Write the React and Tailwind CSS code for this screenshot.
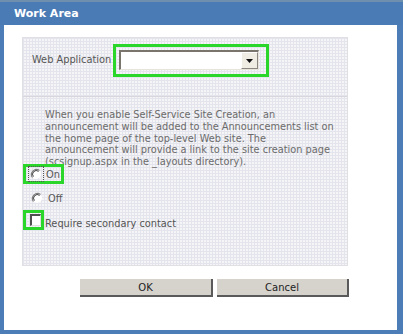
import React from "react";

function Radio({ focus }) {
  return (
    <span className={"relative inline-flex items-center justify-center w-[14px] h-[14px] " + (focus ? "outline outline-1 outline-dotted outline-[#555]" : "")}>
      <svg width="12" height="12" viewBox="0 0 12 12">
        <circle cx="6" cy="6" r="5" fill="#ffffff" />
        <path d="M9.5 2.5 A5 5 0 0 0 2.5 9.5" fill="none" stroke="#808080" strokeWidth="1.2" />
        <path d="M8.6 3.4 A3.7 3.7 0 0 0 3.4 8.6" fill="none" stroke="#404040" strokeWidth="1" />
      </svg>
    </span>
  );
}

export default function App() {
  const grid =
    "bg-[#f5f5f7] bg-[linear-gradient(to_right,#e4e4ec_1px,transparent_1px),linear-gradient(to_bottom,#e4e4ec_1px,transparent_1px)] bg-[size:3px_3px]";
  const font = "font-['DejaVu_Sans',Verdana,sans-serif]";
  return (
    <div className={"w-[403px] h-[334px] bg-[#4d7db6] flex flex-col overflow-hidden " + font}>
      <div className="h-[25px] shrink-0 flex items-center pl-[14px] border-t-[2px] border-[#6f8fae] bg-[#4b7bb5]">
        <span className="text-white font-bold text-[11px] leading-none">Work Area</span>
      </div>
      <div className="ml-[4px] mr-[6px] h-[305px] bg-white flex flex-col pl-[18px] pt-[12px]">
        <div className={"w-[326px] h-[229px] border border-[#e0e0e4] flex flex-col " + grid}>
          <div className="h-[59px] shrink-0 border-b border-[#d6d6dc] flex items-start pt-[6px] pl-[9px]">
            <div className="h-[33px] w-[81px] flex items-center">
              <span className="text-[9.8px] text-[#555] whitespace-nowrap">Web Application</span>
            </div>
            <div className="border-[3px] border-[#2ad62a] pl-[3px] pr-[7px] pt-[3px] pb-[4px]">
              <div className="w-[140px] h-[20px] bg-white border-t-2 border-l-2 border-t-[#7a756c] border-l-[#7a756c] border-b border-r border-b-[#e8e4dc] border-r-[#e8e4dc] flex justify-end">
                <div className="w-[17px] h-full bg-[#efece4] border-l border-t border-[#ffffff] border-r border-b border-r-[#8a8680] border-b-[#8a8680] flex items-center justify-center">
                  <svg width="7" height="4" viewBox="0 0 7 4"><path d="M0 0 H7 L3.5 4 Z" fill="#111" /></svg>
                </div>
              </div>
            </div>
          </div>
          <div className="flex flex-col pt-[12px]">
            <p className="pl-[22px] pr-[4px] text-[9.75px] leading-[11.8px] text-[#6b6b6b] whitespace-nowrap">
              When you enable Self-Service Site Creation, an<br />
              announcement will be added to the Announcements list on<br />
              the home page of the top-level Web site. The<br />
              announcement will provide a link to the site creation page<br />
              (scsignup.aspx in the _layouts directory).
            </p>
            <div className="mt-[-4px] w-[41px] h-[20px] border-[3px] border-[#2ad62a] flex items-center pl-[3px]">
              <Radio focus />
              <span className="ml-[3px] mt-[3px] text-[9.8px] text-[#555]">On</span>
            </div>
            <div className="flex items-center pl-[7px] mt-[5px]">
              <Radio />
              <span className="ml-[4px] mt-[3px] text-[9.8px] text-[#555]">Off</span>
            </div>
            <div className="flex items-end mt-[3px]">
              <div className="w-[21px] h-[20px] border-[3px] border-[#2ad62a] flex items-center pl-[4px]">
                <span className="w-[12px] h-[12px] bg-white border-t-[2px] border-l-[2px] border-t-[#505050] border-l-[#505050] border-b border-r border-b-[#e0e0e0] border-r-[#e0e0e0]" />
              </div>
              <span className="ml-[1px] mb-[-2px] text-[9.8px] text-[#555]">Require secondary contact</span>
            </div>
          </div>
        </div>
        <div className="flex gap-[4px] pl-[58px] mt-[13px]">
          <button className="w-[133px] h-[18px] bg-[#d6d3cd] border-r-2 border-b-2 border-[#5a5a5a] text-[10px] text-[#222] flex items-center justify-center">OK</button>
          <button className="w-[132px] h-[18px] bg-[#d6d3cd] border-r-2 border-b-2 border-[#5a5a5a] text-[10px] text-[#222] flex items-center justify-center">Cancel</button>
        </div>
      </div>
    </div>
  );
}
